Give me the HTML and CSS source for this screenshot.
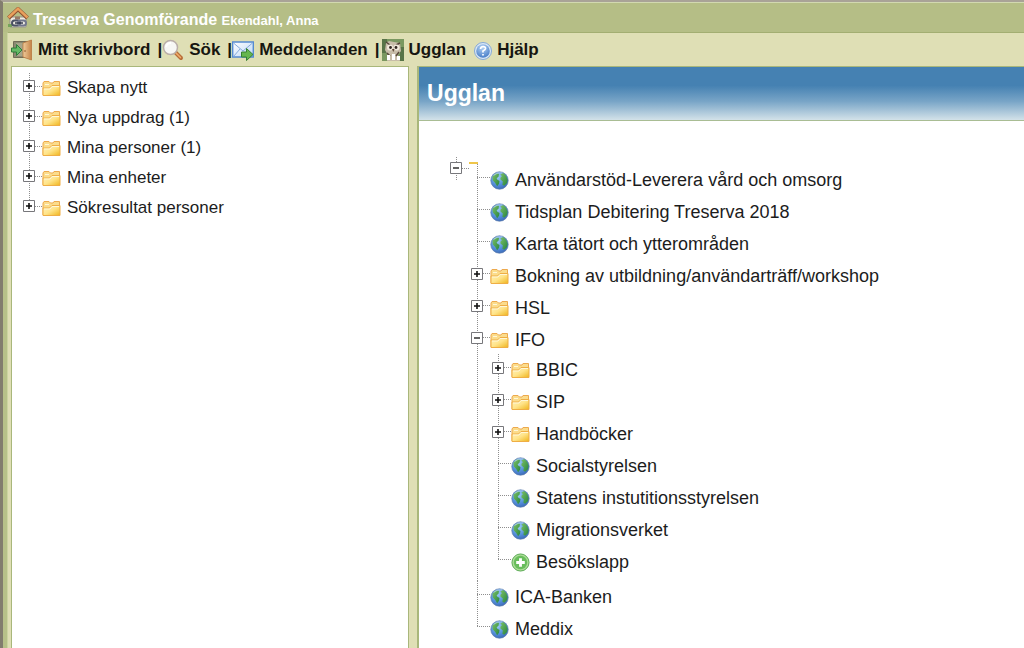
FILE: index.html
```
<!DOCTYPE html>
<html lang="sv">
<head>
<meta charset="utf-8">
<title>Treserva Genomförande</title>
<link rel="stylesheet" href="styles.css">
</head>
<body>
<svg class="defs" aria-hidden="true">
  <defs>
    <linearGradient id="folderFill" x1="0" y1="0" x2="1" y2="1"><stop offset="0" stop-color="#fff2bd"/><stop offset=".5" stop-color="#ffe48a"/><stop offset="1" stop-color="#efb51c"/></linearGradient>
    <radialGradient id="sea" cx=".4" cy=".3" r=".8"><stop offset="0" stop-color="#9ccbf5"/><stop offset=".55" stop-color="#5590da"/><stop offset="1" stop-color="#3560b0"/></radialGradient>
    <linearGradient id="land" x1="0" y1="0" x2="1" y2="1"><stop offset="0" stop-color="#7cc067"/><stop offset="1" stop-color="#26853e"/></linearGradient>
    <radialGradient id="helpFill" cx=".45" cy=".25" r=".8"><stop offset="0" stop-color="#b5d3f4"/><stop offset="1" stop-color="#4279c6"/></radialGradient>
    <linearGradient id="doorFill" x1="0" y1="0" x2="1" y2="0"><stop offset="0" stop-color="#f0cc9c"/><stop offset="1" stop-color="#c48347"/></linearGradient>
    <linearGradient id="mailFill" x1="0" y1="0" x2="1" y2="1"><stop offset="0" stop-color="#ffffff"/><stop offset="1" stop-color="#bcd7f6"/></linearGradient>
  </defs>
  <symbol id="folder" viewBox="0 0 19 17">
    <path d="M1 15V3l1-1.500h5L8.500 3H11l1-1.500h5.500V15z" fill="#fbdc8c" stroke="#eda94d"/>
    <path d="M1 15.500V8h6.500L10 5.500h8v10z" fill="url(#folderFill)" stroke="#efae45"/>
    <path d="M3 4.500h4M2 9h6l2-2.500h7" fill="none" stroke="#fff7d8"/>
  </symbol>
  <symbol id="globe" viewBox="0 0 20 20">
    <circle cx="10" cy="10" r="9.200" fill="url(#sea)" stroke="#5c7cab" stroke-width=".7"/>
    <path d="M2.500 6L6 2.500l3.500.5-.5 3L7 7.500l.5 1.500 2.500 1.500-.5 3-2 2.500-2-3.500L3 10z" fill="url(#land)"/>
    <path d="M11 3.500l3-1.500 3 3 1.500 4-.5 3.500-3 3-2-1 .5-3.500-2.500-2L11 7l1.500-1.500z" fill="url(#land)"/>
    <path d="M4 4.500Q8 1 13 2" fill="none" stroke="#d5eaff" stroke-opacity=".6"/>
  </symbol>
  <symbol id="add" viewBox="0 0 20 20">
    <circle cx="10" cy="10" r="9" fill="#a9dc94" stroke="#55a650"/>
    <circle cx="10" cy="10" r="7" fill="#68bd5c"/>
    <path d="M10 5.500v9M5.500 10h9" stroke="#fff" stroke-width="3"/>
  </symbol>
  <symbol id="plus" viewBox="0 0 12 12">
    <path d="M.5.500h11v11H.500z" fill="#fff" stroke="#77777b"/><path d="M6 3v6M3 6h6" stroke="#111" stroke-width="1.600"/>
  </symbol>
  <symbol id="minus" viewBox="0 0 12 12">
    <path d="M.5.500h11v11H.500z" fill="#fff" stroke="#77777b"/><path d="M3 6h6" stroke="#222" stroke-width="1.400"/>
  </symbol>
</svg>

<header class="titlebar">
  <svg class="home" viewBox="0 0 22 22" aria-hidden="true">
    <path d="M3 10h16v10H3z" fill="#eeeae2" stroke="#99958b"/>
    <path d="M1.500 11L11 2l9.500 9" fill="none" stroke="#8f5132" stroke-width="4"/>
    <path d="M1.500 10.500L11 1.700l9.500 8.800" fill="none" stroke="#e9a05c" stroke-width="2.500"/>
    <path d="M8 9.500h5v3H8z" fill="#987a66"/>
    <path d="M1 17h4v3H1z" fill="#75a35b"/>
    <rect x="5" y="13.500" width="8" height="5" rx="2.500" fill="none" stroke="#4b5165" stroke-width="2"/>
    <rect x="11" y="13.500" width="8" height="5" rx="2.500" fill="none" stroke="#70768c" stroke-width="2"/>
    <path d="M8 16h8" stroke="#333a4e" stroke-width="1.500"/>
  </svg>
  <h1>Treserva Genomförande <small>Ekendahl, Anna</small></h1>
</header>

<div class="frame">
  <nav class="toolbar">
    <a href="#">
      <svg class="tool" viewBox="0 0 22 22" aria-hidden="true">
        <path d="M2.500 2.500h14v16h-14z" fill="#8b8a72" stroke="#716c56"/><path d="M5 4h8v13H5z" fill="#a6a489"/>
        <path d="M12 4l8.500-3v20L12 18z" fill="url(#doorFill)" stroke="#b9793f" stroke-width=".8"/><circle cx="14" cy="12" r=".8" fill="#805128"/>
        <path d="M.5 9h5V5.500L11 11l-5.500 5.500V13h-5z" fill="#65b965" stroke="#2e7d3b"/>
      </svg>Mitt skrivbord</a>
    <span class="sep">|</span>
    <a href="#">
      <svg class="tool" viewBox="0 0 22 22" aria-hidden="true">
        <path d="M13 13l6 6" stroke="#b96d38" stroke-width="4" stroke-linecap="round"/><path d="M14 14l4.500 4.500" stroke="#f1af6c" stroke-width="1.500" stroke-linecap="round"/>
        <circle cx="8.500" cy="8.500" r="7" fill="#f7f7f4" stroke="#b9aea8" stroke-width="1.500"/>
        <path d="M4 8q1-4 5-4" fill="none" stroke="#fff" stroke-width="2"/>
      </svg>Sök</a>
    <span class="sep">|</span>
    <a href="#">
      <svg class="tool" viewBox="0 0 22 22" aria-hidden="true">
        <path d="M.7 3h20.600v15H.7z" fill="url(#mailFill)" stroke="#558bd1" stroke-width="1.400"/>
        <path d="M1.500 4L11 12l9.500-8M1.500 17.500L8 10M20.500 17L14 10" fill="none" stroke="#85abdc"/>
        <path d="M9.500 13h5v-3.500l6.500 6-6.500 6V18h-5z" fill="#65b64e" stroke="#358132"/>
      </svg>Meddelanden</a>
    <span class="sep">|</span>
    <a class="owl" href="#">
      <svg class="tool" viewBox="0 0 22 22" aria-hidden="true">
        <path d="M0 0h22v22H0z" fill="#7a9860"/><path d="M0 0h5v14H0zM18 8h4v14h-4z" fill="#587448"/>
        <path d="M4 4l3-2 5 1 6 1 1 8-3 4 2 6H5l1-6-3-5z" fill="#c8bda9"/>
        <path d="M4 3l4 3M18 4l-4 2M5 14l3 3M17 13l-3 4" stroke="#58483b" stroke-width="1.500"/>
        <circle cx="8" cy="8.500" r="3" fill="#f1e9dc"/><circle cx="14.500" cy="8.500" r="3" fill="#f1e9dc"/>
        <circle cx="8.500" cy="8.500" r="1.400" fill="#30251f"/><circle cx="14" cy="8.500" r="1.400" fill="#30251f"/>
        <path d="M10 10h2.500l-1.200 3z" fill="#59402f"/>
        <path d="M5 16h3v5H5zM10 15h3v6h-3zM15 17h3v4h-3z" fill="#fff"/>
      </svg>Ugglan</a>
    <a class="help" href="#">
      <svg class="tool" viewBox="0 0 22 22" aria-hidden="true">
        <circle cx="13" cy="12" r="8.500" fill="#dbe8f5" stroke="#85a8d6"/><circle cx="13" cy="12" r="6.800" fill="url(#helpFill)"/>
        <path d="M10.500 10q.3-2.500 2.700-2.500 2.500.2 2.300 2.200-.2 1.300-2.500 2.300v1.500M13 15v1.500" fill="none" stroke="#fff" stroke-width="1.700"/>
      </svg>Hjälp</a>
  </nav>

  <div class="panes">
    <aside class="pane side">
      <ul class="tree small">
        <li><div class="row"><span class="stem"><button aria-label="Expandera Skapa nytt"><svg><use href="#plus"/></svg></button></span><svg class="icon"><use href="#folder"/></svg><a href="#">Skapa nytt</a></div></li>
        <li><div class="row"><span class="stem"><button aria-label="Expandera Nya uppdrag"><svg><use href="#plus"/></svg></button></span><svg class="icon"><use href="#folder"/></svg><a href="#">Nya uppdrag (1)</a></div></li>
        <li><div class="row"><span class="stem"><button aria-label="Expandera Mina personer"><svg><use href="#plus"/></svg></button></span><svg class="icon"><use href="#folder"/></svg><a href="#">Mina personer (1)</a></div></li>
        <li><div class="row"><span class="stem"><button aria-label="Expandera Mina enheter"><svg><use href="#plus"/></svg></button></span><svg class="icon"><use href="#folder"/></svg><a href="#">Mina enheter</a></div></li>
        <li><div class="row"><span class="stem"><button aria-label="Expandera Sökresultat personer"><svg><use href="#plus"/></svg></button></span><svg class="icon"><use href="#folder"/></svg><a href="#">Sökresultat personer</a></div></li>
      </ul>
    </aside>

    <main class="pane content">
      <h2>Ugglan</h2>
      <div class="root"><span class="stem"><button aria-label="Fäll ihop"><svg><use href="#minus"/></svg></button></span><span class="dash"></span></div>
      <ul class="tree large">
        <li><div class="row"><span class="stem"></span><svg class="icon"><use href="#globe"/></svg><a href="#">Användarstöd-Leverera vård och omsorg</a></div></li>
        <li><div class="row"><span class="stem"></span><svg class="icon"><use href="#globe"/></svg><a href="#">Tidsplan Debitering Treserva 2018</a></div></li>
        <li><div class="row"><span class="stem"></span><svg class="icon"><use href="#globe"/></svg><a href="#">Karta tätort och ytterområden</a></div></li>
        <li><div class="row"><span class="stem"><button aria-label="Expandera Bokning"><svg><use href="#plus"/></svg></button></span><svg class="icon"><use href="#folder"/></svg><a href="#">Bokning av utbildning/användarträff/workshop</a></div></li>
        <li><div class="row"><span class="stem"><button aria-label="Expandera HSL"><svg><use href="#plus"/></svg></button></span><svg class="icon"><use href="#folder"/></svg><a href="#">HSL</a></div></li>
        <li><div class="row"><span class="stem"><button aria-label="Fäll ihop IFO"><svg><use href="#minus"/></svg></button></span><svg class="icon"><use href="#folder"/></svg><a href="#">IFO</a></div>
          <ul class="branch">
            <li><div class="row"><span class="stem"><button aria-label="Expandera BBIC"><svg><use href="#plus"/></svg></button></span><svg class="icon"><use href="#folder"/></svg><a href="#">BBIC</a></div></li>
            <li><div class="row"><span class="stem"><button aria-label="Expandera SIP"><svg><use href="#plus"/></svg></button></span><svg class="icon"><use href="#folder"/></svg><a href="#">SIP</a></div></li>
            <li><div class="row"><span class="stem"><button aria-label="Expandera Handböcker"><svg><use href="#plus"/></svg></button></span><svg class="icon"><use href="#folder"/></svg><a href="#">Handböcker</a></div></li>
            <li><div class="row"><span class="stem"></span><svg class="icon"><use href="#globe"/></svg><a href="#">Socialstyrelsen</a></div></li>
            <li><div class="row"><span class="stem"></span><svg class="icon"><use href="#globe"/></svg><a href="#">Statens instutitionsstyrelsen</a></div></li>
            <li><div class="row"><span class="stem"></span><svg class="icon"><use href="#globe"/></svg><a href="#">Migrationsverket</a></div></li>
            <li><div class="row"><span class="stem"></span><svg class="icon"><use href="#add"/></svg><a href="#">Besökslapp</a></div></li>
          </ul>
        </li>
        <li><div class="row"><span class="stem"></span><svg class="icon"><use href="#globe"/></svg><a href="#">ICA-Banken</a></div></li>
        <li><div class="row"><span class="stem"></span><svg class="icon"><use href="#globe"/></svg><a href="#">Meddix</a></div></li>
      </ul>
    </main>
  </div>
</div>
</body>
</html>
```
FILE: styles.css
```
* { box-sizing: border-box; }
html { height: 100%; }
body {
  margin: 0;
  min-height: 100%;
  display: flex;
  flex-direction: column;
  border-top: 2px solid #a9a397;
  border-left: 3px solid #827d6e;
  background: #b7c189;
  color: #1c1c1c;
  font-family: "Liberation Sans", Arial, sans-serif;
}
a { color: inherit; text-decoration: none; }
ul { margin: 0; padding: 0; list-style: none; }
.defs { position: absolute; width: 0; height: 0; }

.titlebar {
  display: flex;
  align-items: center;
  gap: 4px;
  height: 30px;
  padding: 0 4px;
  border-top: 1px solid #d2d9b0;
  background: #b5be86;
}
.home { width: 22px; height: 22px; flex: none; }
h1 { margin: 0; padding-top: 4px; font-size: 16px; color: #fff; }
h1 small { font-size: 13px; }

.frame {
  flex: 1;
  display: flex;
  flex-direction: column;
  margin-left: 4px;
  border-top: 1px solid #a3ae72;
  border-left: 1px solid #ccd5a1;
  background: #dfdfb5;
}
.toolbar {
  display: flex;
  align-items: center;
  height: 33px;
  padding-left: 3px;
  font-size: 17px;
  font-weight: bold;
  color: #161610;
}
.toolbar a { display: flex; align-items: center; gap: 5px; }
.tool { width: 22px; height: 22px; flex: none; }
.sep { padding-left: 7px; }
.toolbar .owl, .toolbar .help { margin-left: 2px; }
.toolbar .help { padding-left: 2px; }

.panes {
  flex: 1;
  display: grid;
  grid-template-columns: 40fr 61fr;
  gap: 8px;
  padding-left: 3px;
}
.pane { border: 1px solid #a9b77b; border-bottom: 0; background: #fff; }
.side { padding: 6px 0 0 11px; }
.content { border-left-width: 2px; border-right: 0; }
h2 {
  margin: 0;
  height: 54px;
  padding: 0 8px;
  border-bottom: 1px solid #a9bd94;
  background: linear-gradient(#4581b2 0%, #4581b2 35%, #79a5c7 65%, #d3e2e9 100%);
  color: #fff;
  font-size: 23px;
  line-height: 52px;
}

.tree li {
  background: repeating-linear-gradient(#8e8e8e 0 1px, transparent 1px 2px) 6px 0 / 1px 100% no-repeat;
}
.tree li:last-child { background-size: 1px 14px; }
.row { display: flex; align-items: center; height: 32px; }
.small .row { height: 30px; }
.small { font-size: 17px; }
.large { margin-left: 52px; font-size: 18px; }
.branch { margin: -2px 0 0 21px; padding-bottom: 3px; }
.stem {
  display: flex;
  align-items: center;
  align-self: stretch;
  width: 19px;
  padding-bottom: 4px;
  background: repeating-linear-gradient(90deg, #8e8e8e 0 1px, transparent 1px 2px) 6px 13px / 13px 1px no-repeat;
}
.stem button { width: 12px; height: 12px; padding: 0; border: 0; background: none; }
.stem svg { display: block; width: 12px; height: 12px; }
.icon { width: 19px; height: 19px; flex: none; margin-right: 6px; }

.root { display: flex; height: 30px; margin: 34px 0 -21px 31px; }
.root .stem {
  background:
    repeating-linear-gradient(#8e8e8e 0 1px, transparent 1px 2px) 6px 2px / 1px 23px no-repeat,
    repeating-linear-gradient(90deg, #8e8e8e 0 1px, transparent 1px 2px) 6px 13px / 13px 1px no-repeat;
}
.dash { width: 9px; height: 2px; margin-top: 7px; background: #efc64a; }
```
